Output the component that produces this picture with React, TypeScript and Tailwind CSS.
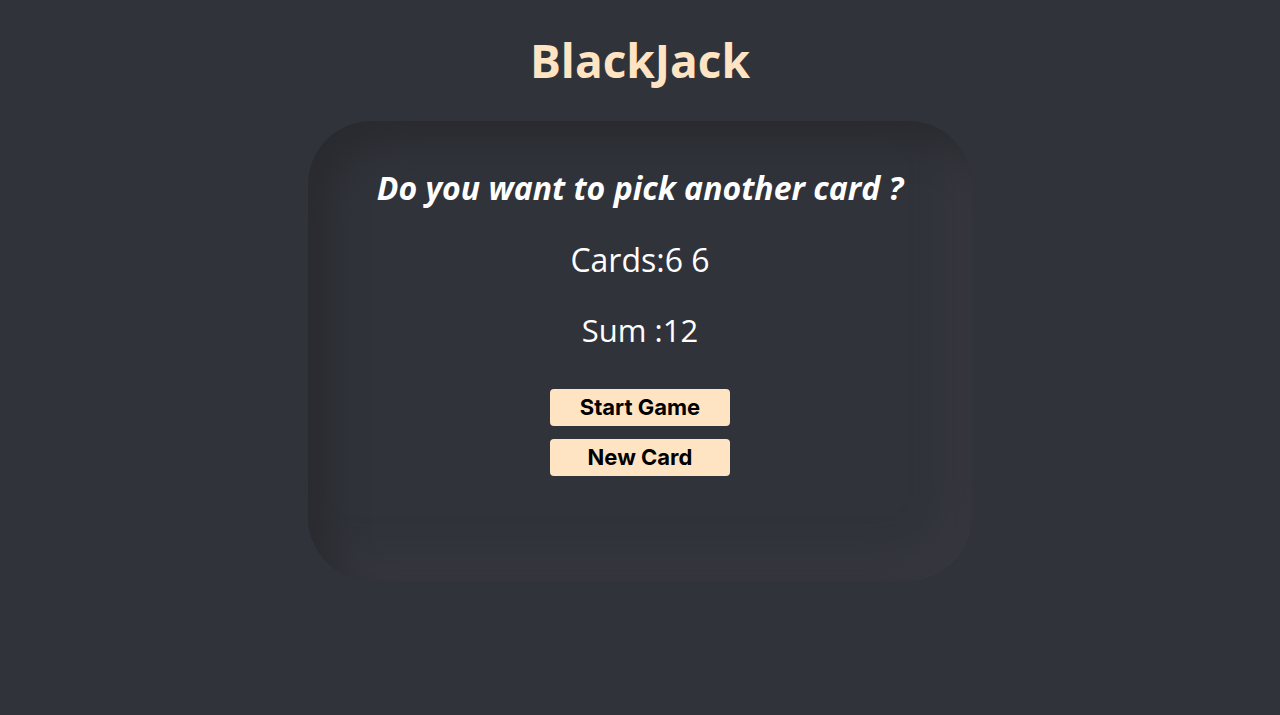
import React from "react";

export default function App() {
  return (
    <div
      className="min-h-[715px] w-full bg-[#31333b] flex flex-col items-center"
      style={{ fontFamily: "'Open Sans', 'DejaVu Sans', sans-serif" }}
    >
      <h1 className="mt-[30px] text-[46px] leading-[60px] font-bold text-[#ffe4c4] font-['Open_Sans',sans-serif]">
        BlackJack
      </h1>
      <div className="mt-[31px] w-[664px] h-[460px] rounded-[64px] bg-[#31333b] shadow-[inset_22px_22px_34px_#2a2b30,inset_-22px_-22px_34px_#37383f] flex flex-col items-center">
        <p className="mt-[47px] text-[32px] leading-[40px] font-bold italic text-white">
          Do you want to pick another card ?
        </p>
        <p className="mt-[32px] text-[32px] leading-[40px] font-medium text-white">Cards:6 6</p>
        <p className="mt-[30px] text-[31px] leading-[40px] font-medium text-white">Sum :12</p>
        <button className="mt-[39px] w-[180px] h-[37px] rounded-[4px] bg-[#ffe4c4] text-black text-[22px] leading-[37px] font-bold font-['Inter',sans-serif]">
          Start Game
        </button>
        <button className="mt-[13px] w-[180px] h-[37px] rounded-[4px] bg-[#ffe4c4] text-black text-[22px] leading-[37px] font-bold font-['Inter',sans-serif]">
          New Card
        </button>
      </div>
    </div>
  );
}
